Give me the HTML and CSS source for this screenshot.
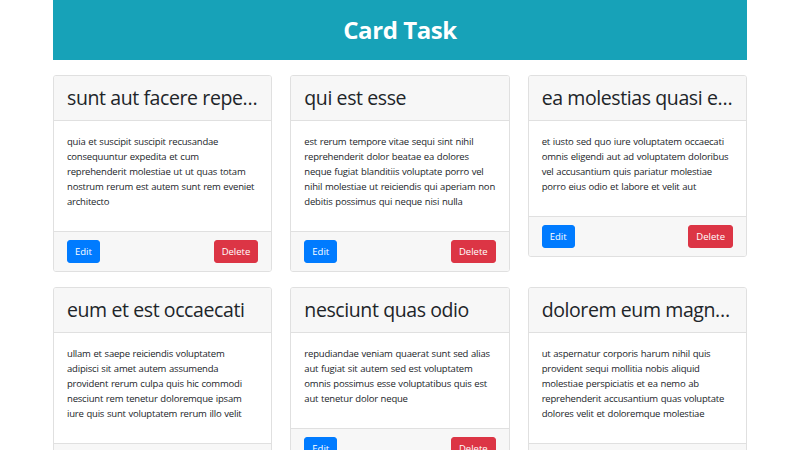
FILE: index.html
```html
<!DOCTYPE html>
<html lang="en">
<head>
<meta charset="utf-8">
<title>Card Task</title>
<link rel="stylesheet" href="styles.css">
</head>
<body>
<div class="container">
  <header class="banner"><h1 class="banner-title">Card Task</h1></header>
  <main class="grid">
    <div class="card">
      <div class="card-header"><h2 class="card-title">sunt aut facere repellat provident occaecati excepturi optio reprehenderit</h2></div>
      <div class="card-body"><p class="card-text">quia et suscipit suscipit recusandae consequuntur expedita et cum reprehenderit molestiae ut ut quas totam nostrum rerum est autem sunt rem eveniet architecto</p></div>
      <div class="card-footer"><button class="btn btn-primary">Edit</button><button class="btn btn-danger">Delete</button></div>
    </div>
    <div class="card">
      <div class="card-header"><h2 class="card-title">qui est esse</h2></div>
      <div class="card-body"><p class="card-text">est rerum tempore vitae sequi sint nihil reprehenderit dolor beatae ea dolores neque fugiat blanditiis voluptate porro vel nihil molestiae ut reiciendis qui aperiam non debitis possimus qui neque nisi nulla</p></div>
      <div class="card-footer"><button class="btn btn-primary">Edit</button><button class="btn btn-danger">Delete</button></div>
    </div>
    <div class="card">
      <div class="card-header"><h2 class="card-title">ea molestias quasi exercitationem repellat qui ipsa sit aut</h2></div>
      <div class="card-body"><p class="card-text">et iusto sed quo iure voluptatem occaecati omnis eligendi aut ad voluptatem doloribus vel accusantium quis pariatur molestiae porro eius odio et labore et velit aut</p></div>
      <div class="card-footer"><button class="btn btn-primary">Edit</button><button class="btn btn-danger">Delete</button></div>
    </div>
    <div class="card">
      <div class="card-header"><h2 class="card-title">eum et est occaecati</h2></div>
      <div class="card-body"><p class="card-text">ullam et saepe reiciendis voluptatem adipisci sit amet autem assumenda provident rerum culpa quis hic commodi nesciunt rem tenetur doloremque ipsam iure quis sunt voluptatem rerum illo velit</p></div>
      <div class="card-footer"><button class="btn btn-primary">Edit</button><button class="btn btn-danger">Delete</button></div>
    </div>
    <div class="card">
      <div class="card-header"><h2 class="card-title">nesciunt quas odio</h2></div>
      <div class="card-body"><p class="card-text">repudiandae veniam quaerat sunt sed alias aut fugiat sit autem sed est voluptatem omnis possimus esse voluptatibus quis est aut tenetur dolor neque</p></div>
      <div class="card-footer"><button class="btn btn-primary">Edit</button><button class="btn btn-danger">Delete</button></div>
    </div>
    <div class="card">
      <div class="card-header"><h2 class="card-title">dolorem eum magni eos aperiam quia</h2></div>
      <div class="card-body"><p class="card-text">ut aspernatur corporis harum nihil quis provident sequi mollitia nobis aliquid molestiae perspiciatis et ea nemo ab reprehenderit accusantium quas voluptate dolores velit et doloremque molestiae</p></div>
      <div class="card-footer"><button class="btn btn-primary">Edit</button><button class="btn btn-danger">Delete</button></div>
    </div>
  </main>
</div>
</body>
</html>
```
FILE: styles.css
```css
* { box-sizing: border-box; }
html, body { margin: 0; padding: 0; background: #fff; }
body {
  font-family: "Open Sans", "Noto Sans", "Liberation Sans", sans-serif;
  color: #212529;
  font-size: 9.5px;
}
.container {
  width: 694px;
  margin: 0 auto;
}
.banner {
  background: #17a2b8;
  height: 60px;
  display: flex;
  align-items: center;
  justify-content: center;
}
.banner-title {
  margin: 0;
  color: #fff;
  font-size: 24px;
  font-weight: 700;
  line-height: 1;
  letter-spacing: -0.4px;
}
.grid {
  display: grid;
  grid-template-columns: repeat(3, 1fr);
  column-gap: 18px;
  row-gap: 15px;
  align-items: start;
  margin-top: 15px;
}
.card {
  border: 1px solid #e0e0e0;
  border-radius: 3px;
  background: #fff;
  overflow: hidden;
}
.card-header {
  background: #f7f7f7;
  border-bottom: 1px solid #e0e0e0;
  padding: 9px 13px;
}
.card-title {
  margin: 0;
  font-size: 19.5px;
  font-weight: 400;
  line-height: 26px;
  white-space: nowrap;
  overflow: hidden;
  text-overflow: ellipsis;
  letter-spacing: -0.4px;
}
.card-body {
  padding: 13px;
}
.card-text {
  margin: 0 0 9px;
  line-height: 15px;
  letter-spacing: -0.2px;
  word-spacing: 0.5px;
}
.card-footer {
  background: #f7f7f7;
  border-top: 1px solid #e0e0e0;
  padding: 8px 13px;
  display: flex;
  justify-content: space-between;
  align-items: center;
}
.btn {
  font-family: inherit;
  font-size: 9.5px;
  height: 23px;
  line-height: 21px;
  padding: 0 7px;
  border: 1px solid transparent;
  border-radius: 3px;
  color: #fff;
  cursor: pointer;
}
.btn-primary { background: #007bff; border-color: #007bff; }
.btn-danger { background: #dc3545; border-color: #dc3545; }
```
